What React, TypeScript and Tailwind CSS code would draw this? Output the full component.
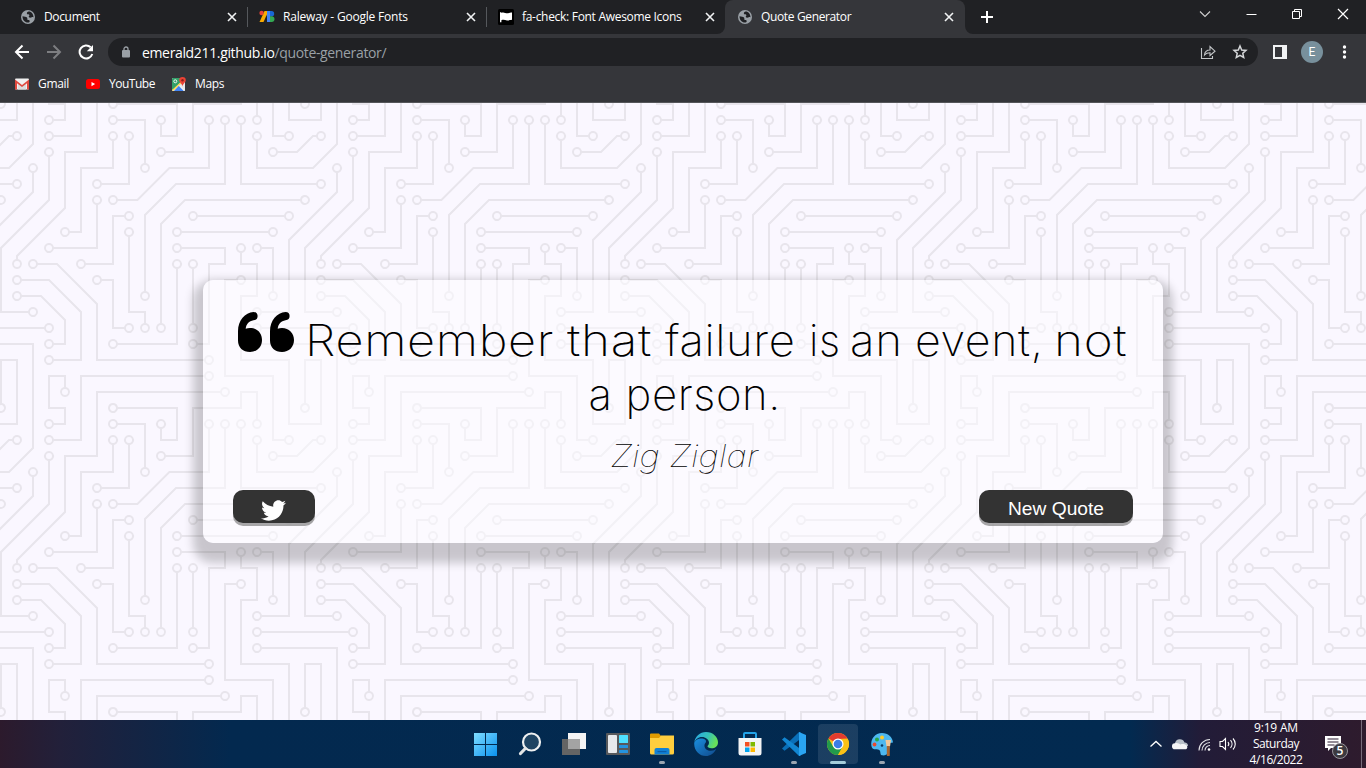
import React from "react";
import { FaTwitter } from "react-icons/fa";

/* ---------- circuit board pattern ---------- */

const TRACES =
  "M44.1 224a5 5 0 1 1 0 2H0v-2h44.1zm160 48a5 5 0 1 1 0 2H82v-2h122.1zm57.8-46a5 5 0 1 1 0-2H304v2h-42.1zm0 16a5 5 0 1 1 0-2H304v2h-42.1zm6.2-114a5 5 0 1 1 0 2h-86.2a5 5 0 1 1 0-2h86.2zm-256-48a5 5 0 1 1 0 2H0v-2h12.1zm185.8 34a5 5 0 1 1 0-2h86.2a5 5 0 1 1 0 2h-86.2zM258 12.1a5 5 0 1 1-2 0V0h2v12.1zm-64 208a5 5 0 1 1-2 0v-54.2a5 5 0 1 1 2 0v54.2zm48-198.2V80h62v2h-64V21.9a5 5 0 1 1 2 0zm16 16V64h46v2h-48V37.9a5 5 0 1 1 2 0zm-128 96V208h16v12.1a5 5 0 1 1-2 0V210h-16v-76.1a5 5 0 1 1 2 0zm-5.9-21.9a5 5 0 1 1 0 2H114v48H85.9a5 5 0 1 1 0-2H112v-48h12.1zm-6.2 130a5 5 0 1 1 0-2H176v-74.1a5 5 0 1 1 2 0V242h-60.1zm-16-64a5 5 0 1 1 0-2H114v48h10.1a5 5 0 1 1 0 2H112v-48h-10.1zM66 284.1a5 5 0 1 1-2 0V274H50v30h-2v-32h18v12.1zM236.1 176a5 5 0 1 1 0 2H226v94h48v32h-2v-30h-48v-98h12.1zm25.8-30a5 5 0 1 1 0-2H274v44.1a5 5 0 1 1-2 0V146h-10.1zm-64 96a5 5 0 1 1 0-2H208v-80h16v-14h-42.1a5 5 0 1 1 0-2H226v18h-16v80h-12.1zm86.2-210a5 5 0 1 1 0 2H272V0h2v32h10.1zM98 101.9V146H53.9a5 5 0 1 1 0-2H96v-42.1a5 5 0 1 1 2 0zM53.9 34a5 5 0 1 1 0-2H80V0h2v34H53.9zm60.1 3.9V66H82v64H69.9a5 5 0 1 1 0-2H80V64h32V37.9a5 5 0 1 1 2 0zM101.9 82a5 5 0 1 1 0-2H128V37.9a5 5 0 1 1 2 0V82h-28.1zm16-64a5 5 0 1 1 0-2H146v44.1a5 5 0 1 1-2 0V18h-26.1zm102.2 270a5 5 0 1 1 0 2H98v14h-2v-16h124.1zM242 149.9V160h16v34h-16v62h48v48h-2v-46h-48v-66h16v-30h-16v-12.1a5 5 0 1 1 2 0zM53.9 18a5 5 0 1 1 0-2H64V2H48V0h18v18H53.9zm112 32a5 5 0 1 1 0-2H192V0h50v2h-48v48h-28.1zm-48-48a5 5 0 0 1-9.8-2h2.07a3 3 0 1 0 5.66 0H178v34h-18V21.9a5 5 0 1 1 2 0V32h14V2h-58.1zm0 96a5 5 0 1 1 0-2H137l32-32h39V21.9a5 5 0 1 1 2 0V66h-40.17l-32 32H117.9zm28.1 90.1a5 5 0 1 1-2 0v-76.51L175.59 80H224V21.9a5 5 0 1 1 2 0V82h-49.59L146 112.41v75.69zm16 32a5 5 0 1 1-2 0v-99.51L184.59 96H300.1a5 5 0 0 1 3.9-3.9v2.07a3 3 0 0 0 0 5.66v2.07a5 5 0 0 1-3.9-3.9H185.41L162 121.41v98.69zm-144-64a5 5 0 1 1-2 0v-3.51l48-48V48h32V0h2v50H66v55.41l-48 48v2.69zM50 53.9v43.51l-48 48V208h26.1a5 5 0 1 1 0 2H0v-65.41l48-48V53.9a5 5 0 1 1 2 0zm-16 16V89.41l-34 34v-2.82l32-32V69.9a5 5 0 1 1 2 0zM12.1 32a5 5 0 1 1 0 2H9.41L0 43.41V40.6L8.59 32h3.51zm265.8 18a5 5 0 1 1 0-2h18.69l7.41-7.41v2.82L297.41 50H277.9zm-16 160a5 5 0 1 1 0-2H288v-71.41l16-16v2.82l-14 14V210h-28.1zm-208 32a5 5 0 1 1 0-2H64v-22.59L40.59 194H21.9a5 5 0 1 1 0-2H41.41L66 216.59V242H53.9zm150.2 14a5 5 0 1 1 0 2H96v-56.6L56.6 162H37.9a5 5 0 1 1 0-2h19.5L98 200.6V256h106.1zm-150.2 2a5 5 0 1 1 0-2H80v-46.59L48.59 178H21.9a5 5 0 1 1 0-2H49.41L82 208.59V258H53.9zM34 39.8v1.61L9.41 66H0v-2h8.59L32 40.59V0h2v39.8zM2 300.1a5 5 0 0 1 3.9 3.9H3.83A3 3 0 0 0 0 302.17V256h18v48h-2v-46H2v42.1zM34 241v63h-2v-62H0v-2h34v1zM17 18H0v-2h16V0h2v18h-1zm273-2h14v2h-16V0h2v16zm-32 273v15h-2v-14h-14v14h-2v-16h18v1zM0 92.1A5.02 5.02 0 0 1 6 97a5 5 0 0 1-6 4.9v-2.07a3 3 0 1 0 0-5.66V92.1zM80 272h2v32h-2v-32zm37.9 32h-2.07a3 3 0 0 0-5.66 0h-2.07a5 5 0 0 1 9.8 0zM5.9 0A5.02 5.02 0 0 1 0 5.9V3.83A3 3 0 0 0 3.83 0H5.9zm294.2 0h2.07A3 3 0 0 0 304 3.83V5.9a5 5 0 0 1-3.9-5.9zm3.9 300.1v2.07a3 3 0 0 0-1.83 1.83h-2.07a5 5 0 0 1 3.9-3.9z";

// Centres of the solder pads, each of which has a round hole.
const PADS: [number, number][] = [
  [49, 225], [209, 273], [257, 225], [257, 241], [273, 129], [177, 129], [17, 81], [193, 113], [289, 113],
  [257, 17], [193, 225], [193, 161], [241, 17], [257, 33], [145, 225], [129, 129], [129, 113], [81, 161],
  [113, 241], [177, 161], [97, 177], [129, 225], [65, 289], [241, 177], [257, 145], [273, 193], [193, 241],
  [177, 145], [289, 33], [49, 145], [97, 97], [49, 33], [65, 129], [113, 33], [97, 81], [129, 33], [113, 17],
  [145, 65], [225, 289], [241, 145], [49, 17], [161, 49], [161, 17], [113, 97], [209, 17], [145, 193],
  [225, 17], [161, 225], [17, 161], [33, 209], [49, 49], [33, 65], [17, 33], [273, 49], [257, 209],
  [49, 241], [17, 193], [209, 257], [33, 161], [49, 257], [17, 177],
];

const HOLES = PADS.map(([x, y]) => `M${x - 3} ${y}a3 3 0 1 0 6 0a3 3 0 1 0-6 0z`).join("");

function Circuit() {
  return (
    <svg className="absolute inset-0 h-full w-full" aria-hidden="true">
      <defs>
        <pattern id="circuit" width="304" height="304" patternUnits="userSpaceOnUse">
          <path d={TRACES + HOLES} fill="#e8e5ec" fillRule="evenodd" />
        </pattern>
      </defs>
      <rect width="100%" height="100%" fill="url(#circuit)" />
    </svg>
  );
}

/* ---------- browser chrome ---------- */

function Globe() {
  return (
    <svg className="h-4 w-4" viewBox="0 0 16 16">
      <circle cx="8" cy="8" r="7" fill="#9aa0a6" />
      <path d="M2.5 7.2c2 .3 3.500.3 4.500 1.200.9.9-.2 1.700.5 2.400.8.6 2-.1 2.200 1.100.1 1-.8 1.500-1.700 1.600C5 13.600 2.400 11 2.500 7.200z" fill="#202124" />
      <path d="M8.500 2.500C7 3 6.600 4 7 4.700c.6.900 2 .3 2.400 1.300.3.900-1 1.200-.6 2 .5.900 2 .7 3 .3.700-.3 1.200-.2 1.700.1C13.600 5.200 11.500 2.400 8.500 2.500z" fill="#202124" />
    </svg>
  );
}

function FontsIcon() {
  return (
    <svg className="h-4 w-4" viewBox="0 0 16 16">
      <path d="M6 2h4v11z" fill="#1a73e8" />
      <path d="M5.500 2H9.500L4.500 13H.5z" fill="#f9ab00" />
      <rect x="8" y="2" width="3" height="11" fill="#4285f4" />
      <circle cx="2.600" cy="4" r="2.200" fill="#ea4335" />
      <path d="M11 2h1.500a2.700 2.700 0 0 1 0 5.400H11z" fill="#1967d2" />
      <path d="M11 7.200h1.600a2.900 2.900 0 0 1 0 5.800H11z" fill="#34a853" />
    </svg>
  );
}

function FlagIcon() {
  return (
    <svg className="h-4 w-4" viewBox="0 0 16 16">
      <rect width="16" height="16" rx="1.500" fill="#000" />
      <path d="M2 3.300h1.400v.6c2.500-1.300 4 .7 6.600.3 1.500-.2 2.500-.7 4-.7v7.300c-2 .1-3 .9-5 .7-2-.2-3.300-1.200-5.600-.2v2H2z" fill="#fff" />
    </svg>
  );
}

function TabClose() {
  return (
    <svg className="h-3 w-3" viewBox="0 0 12 12" stroke="#f1f3f4" strokeWidth="1.600">
      <path d="M2 2l8 8M10 2l-8 8" />
    </svg>
  );
}

function Tab({ icon, title, divider }: { icon: React.ReactNode; title: React.ReactNode; divider?: boolean }) {
  return (
    <div className="relative flex h-full w-[239px] shrink-0 items-center pl-[11px]">
      {icon}
      <span className="ml-2 flex-1 whitespace-nowrap text-white">{title}</span>
      <TabClose />
      <span className="w-[9px]" />
      <span className={divider ? "h-5 w-px bg-[#55585c]" : "h-5 w-px"} />
    </div>
  );
}

function TabStrip() {
  return (
    <div className="flex h-[34px] items-center bg-[#202124] pl-[9px] text-[12px]">
      <Tab icon={<Globe />} title={<span className="tracking-[-0.35px]">Document</span>} divider />
      <Tab icon={<FontsIcon />} title={<span className="tracking-[-0.2px]">Raleway - Google Fonts</span>} divider />
      <Tab icon={<FlagIcon />} title={<span className="tracking-[-0.3px]">fa-check: Font Awesome Icons</span>} />
      <div className="relative -ml-px flex h-full w-[240px] items-center rounded-t-lg bg-[#35363a] pl-3">
        <svg className="absolute bottom-0 -left-2 h-2 w-2" viewBox="0 0 8 8"><path d="M8 0v8H0a8 8 0 0 0 8-8z" fill="#35363a" /></svg>
        <svg className="absolute -right-2 bottom-0 h-2 w-2" viewBox="0 0 8 8"><path d="M0 0v8h8a8 8 0 0 1-8-8z" fill="#35363a" /></svg>
        <Globe />
        <span className="ml-2 flex-1 tracking-[-0.36px] text-white">Quote Generator</span>
        <TabClose />
        <span className="w-[10px]" />
      </div>
      <svg className="ml-[16px] h-3 w-3" viewBox="0 0 12 12" stroke="#fff" strokeWidth="2"><path d="M6 0v12M0 6h12" /></svg>
      <div className="flex-1" />
      <div className="mb-[6px] flex items-center pr-[17px]">
        <svg className="mr-[35px] h-3 w-3" viewBox="0 0 12 12" fill="none" stroke="#d0d0d0" strokeWidth="1.100"><path d="M1 3.500l5 5 5-5" /></svg>
        <svg className="mr-[34px] h-3 w-[11px]" viewBox="0 0 11 12"><path d="M.5 6h10v1H.5z" fill="#fff" /></svg>
        <svg className="mr-[34px] h-3 w-3" viewBox="0 0 12 12" fill="none" stroke="#fff"><path d="M1.500 3.500h7v7h-7zM3.500 3.500v-2h7v7h-2" /></svg>
        <svg className="h-3 w-3" viewBox="0 0 12 12" stroke="#fff" strokeWidth="1.200"><path d="M1 1l10 10M11 1L1 11" /></svg>
      </div>
    </div>
  );
}

function AddressBar() {
  return (
    <div className="flex h-9 items-center bg-[#35363a] pl-[14px]">
      <svg className="h-4 w-4" viewBox="0 0 16 16" fill="none" stroke="#fff" strokeWidth="2"><path d="M15 8H2M8.500 1.500L2 8l6.500 6.500" /></svg>
      <svg className="ml-4 h-4 w-4" viewBox="0 0 16 16" fill="none" stroke="#7d7e81" strokeWidth="2"><path d="M1 8h13M7.500 1.500L14 8l-6.500 6.500" /></svg>
      <svg className="ml-4 h-4 w-4" viewBox="0 0 16 16"><path d="M12.700 3.300A6.500 6.500 0 1 0 14.300 10M14 8" fill="none" stroke="#fff" strokeWidth="2" /><path d="M15 1v6.200H8.800z" fill="#fff" /></svg>
      <div className="ml-[14px] flex h-7 w-[1150px] items-center rounded-full bg-[#202124] pl-[13px]">
        <svg className="h-3 w-[10px]" viewBox="0 0 10 12"><rect x="1" y="4" width="8" height="7.500" rx="1" fill="#9aa0a6" /><path d="M3 4.500V3a2 2 0 0 1 4 0v1.500" fill="none" stroke="#9aa0a6" strokeWidth="1.300" /></svg>
        <span className="ml-[11px] flex-1 text-[14px] tracking-[-0.35px] text-[#9aa0a6]"><span className="text-white">emerald211.github.io</span>/quote-generator/</span>
        <svg className="mr-4 h-4 w-4" viewBox="0 0 16 16" fill="none" stroke="#c4c7c9" strokeWidth="1.100"><path d="M1.500 4v10.500h11V12M4.500 11c.3-3.500 2-5 5.500-5V2.500l5 4.700-5 4.300V8.700c-2.500 0-4 .5-5.500 2.300z" /></svg>
        <svg className="mr-[10px] h-4 w-4" viewBox="0 0 16 16" fill="none" stroke="#d5d7d9" strokeWidth="1.500"><path d="M8 2l1.700 4 4.300.4-3.200 2.900.9 4.200L8 11.300l-3.700 2.200.9-4.200L2 6.400 6.300 6z" /></svg>
      </div>
      <svg className="ml-[15px] h-[14px] w-[14px]" viewBox="0 0 14 14"><path d="M0 0h14v14H0zM2 2v10h7V2z" fill="#f1f3f4" fillRule="evenodd" /></svg>
      <div className="ml-[14px] flex h-[22px] w-[22px] items-center justify-center rounded-full bg-[#78909c] font-['Roboto'] text-[12px] text-white">E</div>
      <svg className="ml-[19px] h-4 w-4" viewBox="0 0 16 16" fill="#fff"><circle cx="2.500" cy="3" r="1.700" /><circle cx="2.500" cy="8" r="1.700" /><circle cx="2.500" cy="13" r="1.700" /></svg>
    </div>
  );
}

function Bookmarks() {
  return (
    <div className="flex h-[33px] items-center border-b border-[#55565a] bg-[#35363a] pb-[4px] pl-[14px] text-[12px] tracking-[-0.3px] text-white">
      <svg className="h-4 w-4" viewBox="0 0 16 16">
        <rect x="1" y="2.500" width="14" height="11" rx="1" fill="#f1f1f1" />
        <path d="M4 13.500V7l4 3 4-3v6.500z" fill="#dcdcdc" />
        <path d="M1 13.500v-10L8 9l7-5.500v10h-2V7.300L8 11 3 7.300v6.200z" fill="#e04a3f" />
      </svg>
      <span className="ml-2">Gmail</span>
      <svg className="ml-4 h-4 w-4" viewBox="0 0 16 16"><rect x="1" y="3" width="14" height="10" rx="2.500" fill="#f00" /><path d="M6.500 6v4.200l3.600-2.100z" fill="#fff" /></svg>
      <span className="ml-2 tracking-[-0.5px]">YouTube</span>
      <svg className="ml-4 h-4 w-4" viewBox="0 0 16 16">
        <rect x="1" y="2" width="13" height="13" rx="1" fill="#e8e8e8" />
        <path d="M1 3a1 1 0 0 1 1-1h8v4L2 14a1 1 0 0 1-1-1z" fill="#34a06a" />
        <path d="M3 15l5-5.500 5 5.500z" fill="#4285f4" />
        <path d="M1.500 14.500L13 4" stroke="#ffd54a" strokeWidth="1.500" />
        <path d="M8 9.500l5.500 5.500" stroke="#fff" />
        <circle cx="4.300" cy="5.300" r="1.500" fill="none" stroke="#fff" strokeWidth=".9" />
        <path d="M11.500 1a3.300 3.300 0 0 1 3.300 3.300c0 2.200-2.700 3-3.300 6.200-.6-3.200-3.300-4-3.300-6.200A3.300 3.300 0 0 1 11.500 1z" fill="#ea4335" />
        <circle cx="11.500" cy="4.300" r="1.200" fill="#8e2018" />
      </svg>
      <span className="ml-2">Maps</span>
    </div>
  );
}

/* ---------- page ---------- */

const QUOTE_MARK =
  "M15.500 0C7 .5 0 8.500 0 19v9.500C0 35.500 5 40 12 40s12-5 12-12-5-12-12-12c-1.700 0-3 .2-4.300.8C8.200 12 11 9 15.500 8.200a4.100 4.100 0 0 0 0-8.200z";

function QuoteCard() {
  return (
    <main className="relative flex h-[263px] w-[960px] flex-col rounded-[10px] bg-[#fefdff]/50 px-[30px] shadow-[0_10px_10px_10px_rgba(0,0,0,0.2)]">
      <div className="flex flex-col items-center pt-[33px] font-['Inter'] text-[43px] leading-[54px] font-extralight tracking-[0.6px] text-black">
        <div className="flex w-[890px] items-start whitespace-nowrap">
          <svg className="-mt-px h-10 w-14 shrink-0" viewBox="0 0 56 40">
            <path d={QUOTE_MARK} />
            <path d={QUOTE_MARK} transform="translate(32 0)" />
          </svg>
          <span className="ml-[11px] w-[262px] shrink-0 origin-left scale-x-[1.13]">Remember </span>
          <span className="w-[98px] shrink-0 origin-left scale-x-[1.15]">that </span>
          <span className="w-[144px] shrink-0 origin-left scale-x-[1.055]">failure </span>
          <span className="w-[41px] shrink-0 origin-left scale-x-[0.97]">is </span>
          <span className="w-[65px] shrink-0 origin-left scale-x-[1.06]">an </span>
          <span className="w-[139px] shrink-0 origin-left scale-x-[1.04]">event, </span>
          <span className="w-[70px] shrink-0 origin-left scale-x-[1.15]">not</span>
        </div>
        <div className="ml-[3px] scale-x-[1.015] whitespace-nowrap">a person.</div>
      </div>
      <div className="mt-[15px] ml-[3px] scale-x-[1.13] text-center font-['Inter'] text-[31px] leading-[39px] font-thin text-black italic">Zig Ziglar</div>
      <div className="mt-[15px] flex justify-between font-['Liberation_Sans'] text-[19.2px] text-white">
        <button className="flex h-[33px] w-[82px] items-center justify-center rounded-[10px] bg-[#333] pt-[7px] pr-[2px] shadow-[0_3px_0_rgba(121,121,121,0.65)]">
          <FaTwitter className="h-[25px] w-[25px]" />
        </button>
        <button className="h-[33px] w-[154px] rounded-[10px] bg-[#333] pt-[4px] leading-[22px] shadow-[0_3px_0_rgba(121,121,121,0.65)]">New Quote</button>
      </div>
    </main>
  );
}

/* ---------- taskbar ---------- */

function Slot({ children, mark, active }: { children: React.ReactNode; mark?: boolean; active?: boolean }) {
  return (
    <div className={active ? "relative flex h-10 w-10 items-center justify-center rounded bg-white/10" : "relative flex h-10 w-10 items-center justify-center"}>
      {children}
      {mark && <span className="absolute bottom-0 h-[3px] w-[6px] rounded-full bg-[#9aa5b1]" />}
      {active && <span className="absolute bottom-0 h-[3px] w-4 rounded-full bg-[#a4cdda]" />}
    </div>
  );
}

function Taskbar() {
  return (
    <footer className="relative flex h-12 items-center bg-[linear-gradient(90deg,#2c1a2c_0px,#22203a_60px,#03294f_230px,#022a50_1130px,#221c38_1200px,#2e1b2d_1366px)] pl-[466px]">
      <div className="flex items-center gap-1">
        <Slot>
          <svg className="h-6 w-6" viewBox="0 0 24 24">
            <defs><linearGradient id="win" x1="0" y1="0" x2="1" y2="1" gradientUnits="objectBoundingBox"><stop stopColor="#7fdcff" /><stop offset="1" stopColor="#0a92f0" /></linearGradient></defs>
            <path d="M0 1h11v11H0zM12 1h11v11H12zM0 13h11v11H0zM12 13h11v11H12z" fill="url(#win)" />
          </svg>
        </Slot>
        <Slot>
          <svg className="h-6 w-6" viewBox="0 0 24 24" fill="none">
            <circle cx="13.500" cy="10" r="8.500" fill="#1f4463" stroke="#eef0f1" strokeWidth="2.200" />
            <path d="M7.300 16.500L2.500 21.500" stroke="#e3e5e6" strokeWidth="3.200" strokeLinecap="round" />
          </svg>
        </Slot>
        <Slot>
          <svg className="h-6 w-6" viewBox="0 0 24 24">
            <rect x="6" y="1" width="18" height="16" fill="#f4f4f4" />
            <rect y="7" width="18" height="16" fill="#646464" />
            <path d="M6 7h12v10H6z" fill="#a3a3a3" />
          </svg>
        </Slot>
        <Slot>
          <svg className="h-6 w-6" viewBox="0 0 24 24">
            <rect y="1" width="24" height="22" rx="1" fill="#57595c" />
            <rect x="2" y="3" width="9" height="18" rx="1" fill="#e8e9ec" />
            <rect x="13" y="3" width="9" height="8" rx=".5" fill="#4fe0ff" />
            <rect x="13" y="13" width="9" height="3" rx=".5" fill="#2593df" />
            <rect x="13" y="18" width="9" height="3" rx=".5" fill="#2593df" />
          </svg>
        </Slot>
        <Slot mark>
          <svg className="h-6 w-6" viewBox="0 0 24 24">
            <path d="M0 2.500A1 1 0 0 1 1 1.500h8l2 2.500H23a1 1 0 0 1 1 1V8H0z" fill="#e09b00" />
            <path d="M0 6h9l2-2.500h13V21a1.500 1.500 0 0 1-1.500 1.500h-21A1.500 1.500 0 0 1 0 21z" fill="#ffce3e" />
            <path d="M4.500 22.500V18A2 2 0 0 1 6.500 16h11a2 2 0 0 1 2 2v4.500z" fill="#1181d6" />
            <path d="M7.500 19h9v1.200h-9z" fill="#0a5ca8" />
          </svg>
        </Slot>
        <Slot>
          <svg className="h-6 w-6" viewBox="0 0 24 24">
            <defs>
              <linearGradient id="edgeTop" x1="0" y1="0" x2="1" y2=".3"><stop stopColor="#28a6e8" /><stop offset=".6" stopColor="#35c1b8" /><stop offset="1" stopColor="#67df5a" /></linearGradient>
              <linearGradient id="edgeBase" x1="0" y1="0" x2="1" y2="1"><stop stopColor="#1a8fe0" /><stop offset="1" stopColor="#114a8b" /></linearGradient>
            </defs>
            <path d="M.3 10.500C2 7 5.500 6 8.500 6.600 13 7.500 12.500 10 11 11.500c-2 4 2 7.500 6 7.300 2.400-.1 4-1 5.200-1.800C20 21.500 16 24 12 24 5 24-.5 18 .3 10.500z" fill="url(#edgeBase)" />
            <path d="M.3 10.500C1 4.500 6 0 12 0c7 0 12 5 12 10.200 0 4-3 6-6.500 6-2.600 0-4-.9-4-1.900 0-.7 1.500-1.400 1.500-3.600C15 7.500 11.500 5 8 5 4 5 1.300 7.500.3 10.500z" fill="url(#edgeTop)" />
          </svg>
        </Slot>
        <Slot>
          <svg className="h-6 w-6" viewBox="0 0 24 24">
            <path d="M6 6V2a1 1 0 0 1 1-1h10a1 1 0 0 1 1 1v4" fill="none" stroke="#23a3e8" strokeWidth="2" />
            <path d="M.5 6h23v15a2.500 2.500 0 0 1-2.500 2.500H3A2.500 2.500 0 0 1 .5 21z" fill="#f3f4f5" />
            <path d="M7 10h4.500v4.500H7z" fill="#f25022" /><path d="M12.500 10H17v4.500h-4.500z" fill="#7fba00" />
            <path d="M7 15.500h4.500V20H7z" fill="#00a4ef" /><path d="M12.500 15.500H17V20h-4.500z" fill="#ffb900" />
          </svg>
        </Slot>
        <Slot mark>
          <svg className="h-6 w-6" viewBox="0 0 24 24">
            <path d="M17 0l1.500.2V7L2.500 18.800 0 16.500z" fill="#0a6fb8" />
            <path d="M2.500 5.300L18.500 17v6.800L17 24 0 7.600z" fill="#1186d2" />
            <path d="M17 0l7 3v18l-7 3z" fill="#2aa5f3" />
          </svg>
        </Slot>
        <Slot active>
          <svg className="h-6 w-6" viewBox="0 0 24 24">
            <circle cx="12" cy="12" r="11" fill="#fbc116" />
            <path d="M12 12L2.470 6.500A11 11 0 0 1 21.530 6.500L12 7z" fill="#e33b2e" />
            <path d="M2.470 6.500A11 11 0 0 0 12 23l4.760-8.250L12 12l-4.760 2.700z" fill="#229a4b" />
            <path d="M21.530 6.500A11 11 0 0 1 12 23l4.760-8.250L15 7h6.800z" fill="#fbc116" />
            <circle cx="12" cy="12" r="5.500" fill="#fff" />
            <circle cx="12" cy="12" r="4.300" fill="#3b7de8" />
          </svg>
        </Slot>
        <Slot mark>
          <svg className="h-6 w-6" viewBox="0 0 24 24">
            <path d="M12 1c6 0 10.500 4 11 9.500l-3 .5-1 9c-1.500 2.800-4.500 3.800-7 3.300-2.600-.6-.6-4.500-3.200-5.600C6.500 17 2.400 18.500 1.400 14 .3 7 5 1 12 1z" fill="#4db8f0" />
            <circle cx="12" cy="5.500" r="2" fill="#ffca28" /><circle cx="7" cy="7.500" r="2" fill="#27a844" /><circle cx="4.500" cy="12.500" r="1.900" fill="#e8492f" />
            <circle cx="12" cy="13.500" r="1.300" fill="#0a3b66" />
            <path d="M15.500 8h5.500l-1 6.500h-3.500z" fill="#f1c79a" /><path d="M16.800 14h3v9a1.500 1.500 0 0 1-3 0z" fill="#a9652f" />
          </svg>
        </Slot>
      </div>
      <div className="flex-1" />
      <svg className="h-3 w-3" viewBox="0 0 12 12" fill="none" stroke="#fff" strokeWidth="1.300"><path d="M.5 8.500L6 3.500l5.500 5" /></svg>
      <svg className="ml-[10px] h-4 w-4" viewBox="0 0 16 16"><path d="M3 7a5 5 0 0 1 9.500-.5A3.500 3.500 0 0 1 16 10H2z" fill="#b9c1c9" /><path d="M0 10.500A3 3 0 0 1 3 7.300c2.500-.8 4 .2 5.500 1.200 2-1 5-.5 6.500 1.500.8 1.500 0 3.300-1.800 3.300H3A2.900 2.900 0 0 1 0 10.500z" fill="#f4f5f6" /></svg>
      <svg className="ml-[9px] h-4 w-4" viewBox="0 0 16 16" fill="none" stroke="#e3e4e8" strokeWidth="1.100"><path d="M2 14.500A11 11 0 0 1 13 3.500M5 14.500a8 8 0 0 1 8-8M8 14.500a5 5 0 0 1 5-5" /><circle cx="12" cy="13.500" r="1.300" fill="#fff" stroke="none" /></svg>
      <svg className="ml-[6px] h-4 w-[18px]" viewBox="0 0 18 16" fill="none" stroke="#fff" strokeWidth="1.100"><path d="M1 5.500h2.500L6.500 2.500v11L3.500 10.500H1zM9 6c1 1.200 1 2.800 0 4M11.500 4.200c2 2.200 2 5.400 0 7.600M14 2.500c3 3.200 3 7.800 0 11" /></svg>
      <div className="ml-[7px] w-[64px] text-center text-[12px] leading-4 tracking-[-0.45px] whitespace-nowrap text-white">
        <div className="tracking-[-0.2px]">9:19 AM</div>
        <div>Saturday</div>
        <div>4/16/2022</div>
      </div>
      <div className="relative ml-[16px] h-6 w-6">
        <svg className="h-6 w-6" viewBox="0 0 24 24">
          <path d="M1 4h16v12H7l-3 3v-3H1z" fill="#fff" />
          <path d="M3.500 7h11M3.500 10h11M3.500 13h7" stroke="#2a1b30" strokeWidth="1.200" />
        </svg>
        <span className="absolute top-[11px] left-2 flex h-4 w-4 items-center justify-center rounded-full border border-[#97939b] bg-[#3c3940] text-[12px] leading-4 font-semibold text-white">5</span>
      </div>
      <span className="ml-[13px] h-12 w-px bg-[#776b7a]" />
      <span className="w-1" />
    </footer>
  );
}

export default function App() {
  return (
    <div className="flex h-[768px] w-[1366px] flex-col overflow-hidden font-['Open_Sans',sans-serif]">
      <header>
        <TabStrip />
        <AddressBar />
        <Bookmarks />
      </header>
      <section className="relative flex flex-1 justify-center bg-[#faf7ff] pt-[177px]">
        <Circuit />
        <QuoteCard />
      </section>
      <Taskbar />
    </div>
  );
}
